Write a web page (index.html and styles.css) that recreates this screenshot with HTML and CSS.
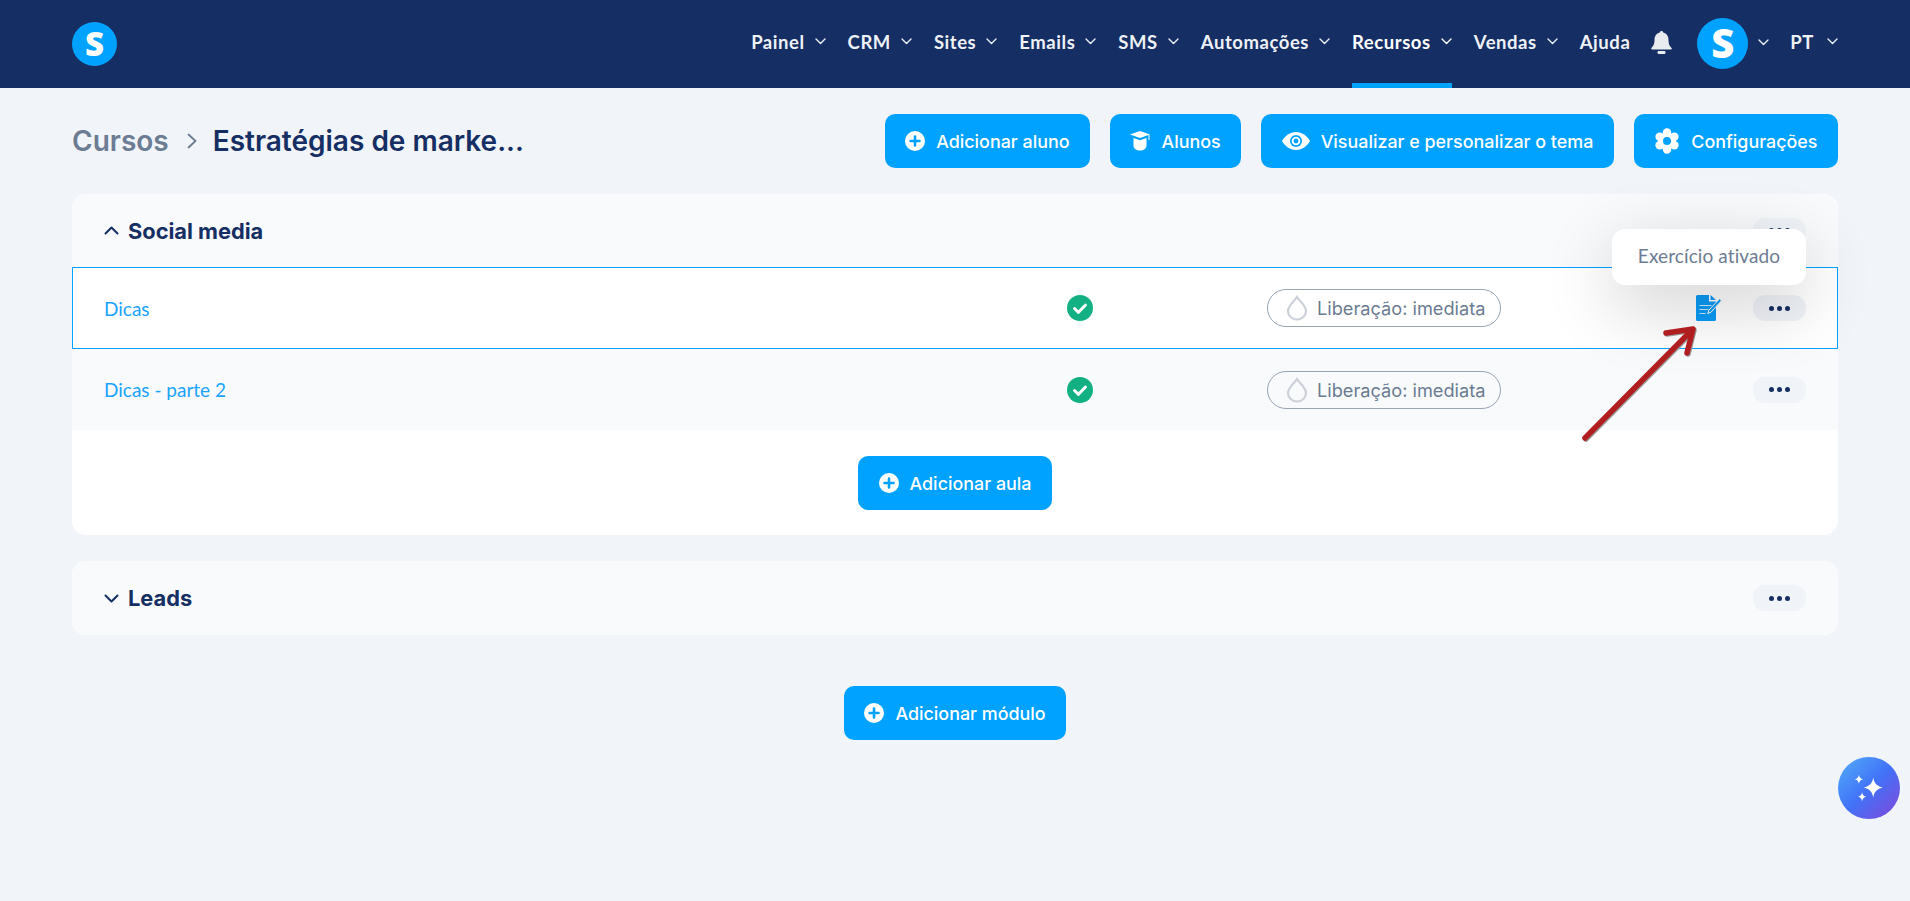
FILE: index.html
```html
<!DOCTYPE html>
<html lang="pt">
<head>
    <meta charset="UTF-8">
    <meta name="viewport" content="width=device-width, initial-scale=1.0">
    <title>Cursos</title>
    <link rel="stylesheet" href="styles.css">
</head>
<body>
    <svg class="defs" width="0" height="0">
        <symbol id="chev" viewBox="0 0 11 7"><path d="M1 1l4.5 4.5L10 1" fill="none" stroke="currentColor" stroke-width="1.4" stroke-linecap="round" stroke-linejoin="round"/></symbol>
        <symbol id="plus" viewBox="0 0 20 20"><circle cx="10" cy="10" r="10" fill="#fff"/><path d="M10 5.5v9M5.5 10h9" stroke="#00a2ff" stroke-width="2.6" stroke-linecap="round"/></symbol>
        <symbol id="check" viewBox="0 0 26 26"><circle cx="13" cy="13" r="13" fill="#12b082"/><path d="M7.5 13.5l4 3.8 7-7.3" fill="none" stroke="#fff" stroke-width="3" stroke-linecap="round" stroke-linejoin="round"/></symbol>
        <symbol id="drop" viewBox="0 0 22 26"><path d="M11 2c2 3.600 9 8.500 9 14a9 8.500 0 0 1-18 0c0-5.500 7-10.400 9-14z" fill="none" stroke="#ccd0d8" stroke-width="2.200"/></symbol>
    </svg>

    <header class="topbar">
        <div class="logo">S</div>
        <nav class="nav">
            <a class="nav-item">Painel <svg class="chev"><use href="#chev"/></svg></a>
            <a class="nav-item">CRM <svg class="chev"><use href="#chev"/></svg></a>
            <a class="nav-item">Sites <svg class="chev"><use href="#chev"/></svg></a>
            <a class="nav-item">Emails <svg class="chev"><use href="#chev"/></svg></a>
            <a class="nav-item">SMS <svg class="chev"><use href="#chev"/></svg></a>
            <a class="nav-item">Automações <svg class="chev"><use href="#chev"/></svg></a>
            <a class="nav-item active">Recursos <svg class="chev"><use href="#chev"/></svg></a>
            <a class="nav-item">Vendas <svg class="chev"><use href="#chev"/></svg></a>
            <a class="nav-item">Ajuda</a>
            <svg class="bell" viewBox="0 0 21 23"><path d="M10.500 0c1 0 1.700.7 1.700 1.600 3.600.8 5.300 3.800 5.300 7.400 0 4.500 1.300 6 3.100 8 .5.600.1 1.500-.7 1.500H1.100c-.8 0-1.200-.9-.7-1.500 1.800-2 3.100-3.500 3.100-8 0-3.600 1.700-6.600 5.300-7.400C8.800.7 9.500 0 10.500 0z" fill="#e8ecef"/><rect x="6.500" y="20" width="8" height="3" rx="1.200" fill="#e8ecef"/></svg>
            <div class="avatar">S</div>
            <svg class="chev chev-user"><use href="#chev"/></svg>
            <a class="nav-item lang">PT <svg class="chev"><use href="#chev"/></svg></a>
        </nav>
    </header>

    <main class="page">
        <div class="toolbar">
            <div class="crumbs">
                <span class="crumb-parent">Cursos</span>
                <svg class="crumb-sep" viewBox="0 0 10 16"><path d="M1.500 1.500L8.500 8l-7 6.500" fill="none" stroke="#6b7c93" stroke-width="1.800" stroke-linecap="round" stroke-linejoin="round"/></svg>
                <span class="crumb-title">Estratégias de marke...</span>
            </div>
            <div class="actions">
                <button class="btn"><svg class="ico"><use href="#plus"/></svg>Adicionar aluno</button>
                <button class="btn">
                    <svg class="ico" viewBox="0 0 20 20"><path d="M10 0L20 3.600l-10 3.400L0 3.600z" fill="#fff"/><path d="M3.500 7l6.500 2.200L16.500 7v7.500c0 3-3 5-6.500 5s-6.500-2-6.500-5z" fill="#fff"/><path d="M19 4v5" stroke="#fff" stroke-width="1"/></svg>
                    Alunos
                </button>
                <button class="btn">
                    <svg class="ico-eye" viewBox="0 0 28 18"><path d="M14 0c6.500 0 11.500 4.500 14 9-2.500 4.500-7.500 9-14 9S2.500 13.500 0 9c2.500-4.500 7.500-9 14-9z" fill="#fff"/><circle cx="14" cy="9" r="6" fill="#00a2ff"/><circle cx="14" cy="9" r="4.300" fill="#fff"/><circle cx="14" cy="9" r="2.400" fill="#00a2ff"/></svg>
                    Visualizar e personalizar o tema
                </button>
                <button class="btn">
                    <svg class="ico-gear" viewBox="0 0 26 26"><g fill="#fff"><circle cx="13" cy="13" r="9"/><circle cx="13" cy="4.500" r="4.200"/><circle cx="13" cy="21.500" r="4.200"/><circle cx="5.600" cy="8.700" r="4.200"/><circle cx="20.400" cy="8.700" r="4.200"/><circle cx="5.600" cy="17.300" r="4.200"/><circle cx="20.400" cy="17.300" r="4.200"/></g><circle cx="13" cy="13" r="4" fill="#00a2ff"/></svg>
                    Configurações
                </button>
            </div>
        </div>

        <section class="module">
            <div class="module-head">
                <svg class="module-chev" viewBox="0 0 15 9"><path d="M1.500 7.500L7.500 1.500l6 6" fill="none" stroke="#152e63" stroke-width="2" stroke-linecap="round" stroke-linejoin="round"/></svg>
                <h2 class="module-title">Social media</h2>
                <button class="more"><i></i><i></i><i></i></button>
            </div>

            <div class="lesson lesson-hover">
                <a class="lesson-name">Dicas</a>
                <svg class="status"><use href="#check"/></svg>
                <span class="pill"><svg class="drop"><use href="#drop"/></svg>Liberação: imediata</span>
                <svg class="exercise" viewBox="0 0 26 26">
                    <path d="M1.500 0H13v6.500h7V24.500a1.500 1.500 0 0 1-1.500 1.500h-17A1.500 1.500 0 0 1 0 24.500v-23A1.500 1.500 0 0 1 1.500 0z" fill="#0a9bf7"/>
                    <path d="M14.500 0l5.500 5h-5.500z" fill="#0a9bf7"/>
                    <path d="M3.500 10.500h12M3.500 14.500h9M3.500 18.500h6" stroke="#cdeafc" stroke-width="1"/>
                    <path d="M23.500 3.800l2 1.900-10.500 11.500-3.300 1.300 1.200-3.400z" fill="#0a9bf7" stroke="#fff" stroke-width="1"/>
                </svg>
                <button class="more"><i></i><i></i><i></i></button>
                <div class="tooltip">Exercício ativado</div>
            </div>

            <div class="lesson">
                <a class="lesson-name">Dicas - parte 2</a>
                <svg class="status"><use href="#check"/></svg>
                <span class="pill"><svg class="drop"><use href="#drop"/></svg>Liberação: imediata</span>
                <span></span>
                <button class="more"><i></i><i></i><i></i></button>
            </div>

            <div class="module-foot">
                <button class="btn"><svg class="ico"><use href="#plus"/></svg>Adicionar aula</button>
            </div>
        </section>

        <section class="module module-closed">
            <div class="module-head">
                <svg class="module-chev" viewBox="0 0 15 9"><path d="M1.500 1.500l6 6 6-6" fill="none" stroke="#152e63" stroke-width="2" stroke-linecap="round" stroke-linejoin="round"/></svg>
                <h2 class="module-title">Leads</h2>
                <button class="more"><i></i><i></i><i></i></button>
            </div>
        </section>

        <div class="add-module">
            <button class="btn"><svg class="ico"><use href="#plus"/></svg>Adicionar módulo</button>
        </div>
    </main>

    <!-- annotation drawn over the screenshot -->
    <svg class="arrow" width="130" height="130" viewBox="0 0 130 130">
        <g fill="none" stroke-linecap="round" stroke-linejoin="round" stroke-width="5.500">
            <path d="M6 119L113 11M87 14l27-4-6 24" stroke="#999" transform="translate(1 1)"/>
            <path d="M6 119L113 11M87 14l27-4-6 24" stroke="#b01e20"/>
        </g>
    </svg>

    <button class="fab">
        <svg viewBox="0 0 32 32" width="34" height="34"><g fill="#fff"><path d="M20 6c.8 5 2.800 8 9 9.500-6.200 1.500-8.200 4.500-9 9.500-.8-5-2.800-8-9-9.500 6.200-1.500 8.200-4.500 9-9.500z"/><path d="M6.500 3.500c.4 2.500 1.500 3.700 4 4.300-2.500.6-3.600 1.800-4 4.300-.4-2.500-1.500-3.700-4-4.300 2.500-.6 3.600-1.800 4-4.300z"/><path d="M9.500 20c.4 2.500 1.500 3.700 4 4.300-2.500.6-3.600 1.800-4 4.300-.4-2.500-1.500-3.700-4-4.300 2.500-.6 3.600-1.800 4-4.300z"/></g></svg>
    </button>
</body>
</html>
```

FILE: styles.css
```css
* {
    box-sizing: border-box;
}

body {
    margin: 0;
    background-color: #f1f4f9;
    color: #152e63;
    font-family: Inter, "Liberation Sans", sans-serif;
    min-height: 901px;
    overflow: hidden;
    position: relative;
}

.defs {
    position: absolute;
}

/* top bar */
.topbar {
    height: 88px;
    background-color: #152e63;
    padding: 0 72px;
    display: flex;
    justify-content: space-between;
    align-items: center;
}

.logo {
    width: 45px;
    height: 44px;
    border-radius: 50%;
    background-color: #00a2ff;
    color: #fff;
    font-family: "Open Sans", sans-serif;
    font-weight: 800;
    font-size: 33px;
    line-height: 44px;
    text-align: center;
}

.nav {
    display: flex;
    align-items: center;
    height: 88px;
    color: #eef1f6;
}

.nav-item {
    height: 88px;
    display: flex;
    align-items: center;
    gap: 10px;
    margin-right: 22px;
    font-family: Lato, sans-serif;
    font-weight: 700;
    font-size: 18.500px;
    letter-spacing: 0.55px;
    border-bottom: 5px solid transparent;
}

.nav-item.active {
    color: #fff;
    border-bottom-color: #00a2ff;
}

.chev {
    width: 11px;
    height: 7px;
    flex: none;
}

.bell {
    width: 21px;
    height: 23px;
    margin: 0 25px 4px -1px;
}

.avatar {
    width: 51px;
    height: 51px;
    border-radius: 50%;
    background-color: #00a2ff;
    color: #fff;
    font-family: "Open Sans", sans-serif;
    font-weight: 800;
    font-size: 40px;
    line-height: 50px;
    text-align: center;
    margin-bottom: 2px;
}

.chev-user {
    margin: 0 21px 4px 10px;
}

.nav-item.lang {
    margin-right: 0;
    gap: 13px;
}

/* page */
.page {
    padding: 0 72px;
}

.toolbar {
    display: flex;
    justify-content: space-between;
    align-items: center;
    padding-top: 26px;
    margin-bottom: 26px;
}

.crumbs {
    display: flex;
    align-items: center;
    font-size: 28px;
    font-weight: 600;
}

.crumb-parent {
    color: #6b7c93;
}

.crumb-sep {
    width: 10px;
    height: 16px;
    margin: 0 16px 0 18px;
}

.actions {
    display: flex;
    gap: 20px;
}

.btn {
    height: 54px;
    padding: 0 20.500px;
    display: inline-flex;
    align-items: center;
    gap: 11px;
    background-color: #00a2ff;
    color: #fff;
    border: none;
    border-radius: 10px;
    font-family: Inter, sans-serif;
    font-size: 17.900px;
    font-weight: 500;
}

.ico {
    width: 20px;
    height: 20px;
    flex: none;
}

.ico-eye {
    width: 28px;
    height: 18px;
    flex: none;
}

.ico-gear {
    width: 26px;
    height: 26px;
    flex: none;
}

/* modules */
.module {
    background-color: #fff;
    border-radius: 14px;
    margin-bottom: 26px;
}

.module-head {
    height: 73px;
    padding: 0 32px;
    display: flex;
    align-items: center;
    background-color: #f8fafc;
    border-radius: 14px 14px 0 0;
}

.module-closed .module-head {
    height: 74px;
    border-radius: 14px;
}

.module-chev {
    width: 15px;
    height: 9px;
    margin-right: 9px;
}

.module-title {
    margin: 0;
    flex: 1;
    font-size: 21.800px;
    font-weight: 700;
}

.more {
    width: 53px;
    height: 26px;
    padding: 0;
    border: none;
    border-radius: 12px;
    background-color: #f0f3f8;
    display: flex;
    justify-content: center;
    align-items: center;
    gap: 3px;
}

.more i {
    width: 5px;
    height: 5px;
    border-radius: 50%;
    background-color: #152e63;
}

.lesson {
    height: 81px;
    display: grid;
    grid-template-columns: 963px 200px 429px 57px 53px;
    align-items: center;
    padding-left: 32px;
    background-color: #f8fafc;
    position: relative;
}

.lesson-hover {
    height: 82px;
    padding-left: 31px;
    background-color: #fff;
    border: 1px solid #00a2ff;
}

.lesson-name {
    color: #1aa3ff;
    font-family: Lato, sans-serif;
    font-size: 19px;
}

.status {
    width: 26px;
    height: 26px;
}

.pill {
    width: 234px;
    height: 38px;
    display: flex;
    align-items: center;
    gap: 9px;
    padding-left: 18px;
    border: 1px solid #98a4b3;
    border-radius: 19px;
    color: #6b7c93;
    font-size: 18.200px;
}

.drop {
    width: 22px;
    height: 26px;
    flex: none;
}

.exercise {
    width: 26px;
    height: 26px;
}

.tooltip {
    position: absolute;
    top: -39px;
    right: 31px;
    width: 194px;
    height: 56px;
    line-height: 54px;
    text-align: center;
    background-color: #fff;
    border-radius: 13px;
    box-shadow: 0 20px 70px rgba(0, 0, 0, 0.2);
    color: #6b7c93;
    font-family: Lato, sans-serif;
    font-size: 19px;
    letter-spacing: 0.1px;
    z-index: 2;
}

.module-foot {
    height: 105px;
    display: flex;
    justify-content: center;
    align-items: flex-start;
    padding-top: 26px;
}

.add-module {
    display: flex;
    justify-content: center;
    padding-top: 25px;
}

/* overlays */
.arrow {
    position: absolute;
    left: 1579px;
    top: 319px;
    z-index: 3;
}

.fab {
    position: absolute;
    left: 1838px;
    top: 757px;
    width: 62px;
    height: 62px;
    padding: 0;
    border: none;
    border-radius: 50%;
    background: linear-gradient(135deg, #52a8f8 5%, #4172f8 50%, #7d4bdc 95%);
    display: flex;
    justify-content: center;
    align-items: center;
}
```
